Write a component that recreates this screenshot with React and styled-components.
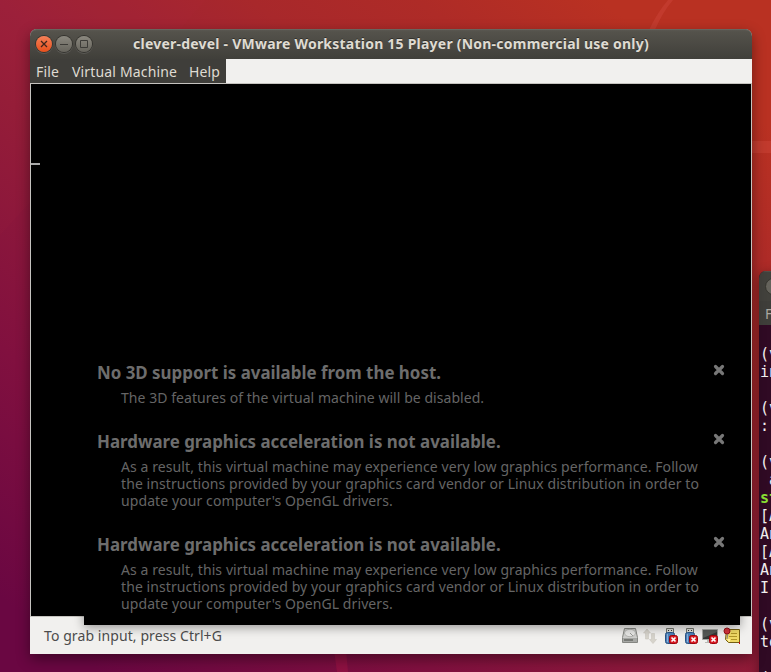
import React from 'react';
import styled, { createGlobalStyle } from 'styled-components';

const GlobalStyle = createGlobalStyle`
  * { box-sizing: border-box; }
  body { margin: 0; overflow: hidden; font-family: "Noto Sans", sans-serif; font-size: 14px; }
`;

const Desktop = styled.main`
  position: relative;
  width: 771px;
  height: 672px;
  overflow: hidden;
`;

const Wallpaper = styled.svg`
  display: block;
  width: 771px;
  height: 672px;
`;

const Window = styled.section`
  position: absolute;
  left: 30px;
  top: 29px;
  width: 722px;
  height: 625px;
  display: flex;
  flex-direction: column;
  background: #f1f0ee;
  border-radius: 7px 7px 0 0;
  box-shadow: 0 5px 14px rgba(0, 0, 0, 0.42);
`;

const TitleBar = styled.header`
  display: grid;
  grid-template-columns: 56px 1fr 56px;
  align-items: center;
  flex: none;
  height: 30px;
  padding: 0 6px;
  border-radius: 7px 7px 0 0;
  background: linear-gradient(#5b5953, #54524b 10%, #403f3a);
  box-shadow: inset 0 1px #67655e;
`;

const WindowButtons = styled.div`
  display: flex;
  gap: 4px;
`;

const RoundButton = styled.button`
  display: grid;
  place-items: center;
  width: 16px;
  height: 16px;
  padding: 0;
  border: 0;
  border-radius: 50%;
  background: ${(p) => (p.$close ? 'linear-gradient(#f58058, #e8501c)' : 'linear-gradient(#8b887f, #66645c)')};
  box-shadow: 0 0 0 1px #34332e, 0 1px 0 1px rgba(255, 255, 255, 0.12);
`;

const Title = styled.h1`
  margin: 0;
  text-align: center;
  color: #dfdbd2;
  font-size: 14px;
  line-height: 20px;
  font-weight: 700;
  letter-spacing: 0.226px;
  white-space: nowrap;
  text-shadow: 0 -1px rgba(0, 0, 0, 0.4);
`;

const MenuBar = styled.nav`
  display: flex;
  flex: none;
  height: 24px;
  align-self: flex-start;
  gap: 12px;
  padding: 0 7px 0 6px;
  background: #3f3e3a;
  color: #dfdbd2;
  line-height: 25px;
  letter-spacing: 0.16px;
  white-space: nowrap;
`;

const MenuItem = styled.span`
  width: ${(p) => p.$width}px;
`;

const Screen = styled.div`
  flex: 1;
  display: flex;
  flex-direction: column;
  justify-content: flex-end;
  border: 1px solid #c5c3bf;
  background: #000;
`;

const Cursor = styled.div`
  width: 9px;
  height: 2px;
  margin: 79px 0 auto;
  background: #aaa;
`;

const Notices = styled.div`
  position: relative;
  z-index: 1;
  width: 656px;
  margin: 0 0 -9px 53px;
  padding: 0 13px 13px;
  background: #000;
  box-shadow: 0 2px 10px rgba(0, 0, 0, 0.4);
`;

const Notice = styled.article`
  color: #656565;
  & + & { margin-top: 22px; }
`;

const NoticeHeader = styled.div`
  display: flex;
  justify-content: space-between;
  align-items: flex-start;
  height: 30px;
  padding-right: 2px;
`;

const NoticeTitle = styled.h2`
  margin: 0;
  color: #6d6d6d;
  font-size: 16.9px;
  line-height: 27px;
  font-weight: 700;
  white-space: nowrap;
`;

const CloseIcon = styled.svg`
  width: 12px;
  height: 12px;
  margin-top: 5px;
`;

const NoticeText = styled.p`
  margin: 0 0 0 24px;
  line-height: 17px;
  letter-spacing: ${(p) => (p.$single ? '0.05px' : '0.09px')};
  white-space: pre;
`;

const StatusBar = styled.footer`
  display: flex;
  flex: none;
  align-items: center;
  justify-content: space-between;
  height: 37px;
  padding: 0 12px 0 14px;
  color: #4c4c4c;
  letter-spacing: 0.085px;
`;

const DeviceIcons = styled.svg`
  width: 118px;
  height: 18px;
`;

const Terminal = styled.section`
  position: absolute;
  left: 759px;
  top: 271px;
  width: 420px;
  height: 460px;
  display: flex;
  flex-direction: column;
  border-radius: 7px 0 0 0;
  background: #300a24;
  box-shadow: 0 3px 12px rgba(0, 0, 0, 0.4);
  overflow: hidden;
`;

const TerminalTitle = styled.header`
  display: flex;
  align-items: center;
  flex: none;
  height: 30px;
  padding-left: 6px;
  background: #42413c;
  box-shadow: inset 0 1px #504f49;
`;

const TerminalButton = styled.span`
  width: 17px;
  height: 17px;
  border: 1px solid #36352f;
  border-radius: 50%;
  background: #65635c;
`;

const TerminalMenu = styled.nav`
  flex: none;
  height: 24px;
  padding-left: 6px;
  background: #3f3e3a;
  color: #aaa8a0;
  line-height: 25px;
`;

const TerminalBody = styled.div`
  padding: 20px 0 0 1px;
  color: #f2f0f1;
  font: 15px/18px "DejaVu Sans Mono", monospace;
  white-space: pre;
`;

const TerminalLine = styled.div`
  height: 18px;
  color: ${(p) => (p.$prompt ? '#8ae234' : 'inherit')};
  font-weight: ${(p) => (p.$prompt ? 700 : 400)};
`;

const noSupport = {
  title: 'No 3D support is available from the host.',
  text: 'The 3D features of the virtual machine will be disabled.',
  single: true,
};
const noAcceleration = {
  title: 'Hardware graphics acceleration is not available.',
  text: "As a result, this virtual machine may experience very low graphics performance. Follow\nthe instructions provided by your graphics card vendor or Linux distribution in order to\nupdate your computer's OpenGL drivers.",
};
const messages = [noSupport, noAcceleration, noAcceleration];

const terminalLines = ['(v', 'in', '', '(v', ':', '', '(v', ' a', 'st', '[A', 'An', '[A', 'An', 'I,', '', '(v', 'to', '', '(v'];

function Background() {
  return (
    <Wallpaper viewBox="0 0 771 672">
      <defs>
        <linearGradient id="base" gradientUnits="userSpaceOnUse" x1="100" y1="672" x2="600" y2="0">
          <stop offset="0" stopColor="#6a0742" />
          <stop offset=".24" stopColor="#81103f" />
          <stop offset=".48" stopColor="#931c38" />
          <stop offset=".57" stopColor="#9b1f3a" />
          <stop offset=".75" stopColor="#a8282b" />
          <stop offset=".87" stopColor="#ae2b27" />
          <stop offset="1" stopColor="#b93122" />
        </linearGradient>
      </defs>
      <path fill="url(#base)" d="M0 0h771v672H0z" />
      <path fill="#c03a48" fillOpacity=".06" d="M0 0h206q-13 13-26 30H30v172L0 235z" />
      <path fill="#cc4437" fillOpacity=".5" d="M668 0h5q-11 13-18 30h-6q8-17 19-30M752 141h19v12h-19z" />
      <path fill="#b51649" fillOpacity=".35" d="M334 650h12l2 22h-11z" />
    </Wallpaper>
  );
}

function ErrorBadge({ x, y }) {
  return (
    <g transform={`translate(${x} ${y})`}>
      <rect x=".5" y=".5" width="8" height="8" rx="2" fill="#d81c24" stroke="#a00008" />
      <path stroke="#fff" strokeWidth="1.7" d="m2.500 2.500 4 4m0-4-4 4" />
    </g>
  );
}

function UsbIcon({ x }) {
  return (
    <g transform={`translate(${x} 0)`}>
      <path fill="#dedfda" stroke="#75776f" d="M2.500 1.500h7v5h-7z" />
      <path fill="#333" d="M4 3h1v1H4zM7 3h1v1H7z" />
      <path fill="#4d80b8" stroke="#285384" d="M1.500 7.500q0-2 2-2h5q2 0 2 2v7q0 2-2 2h-5q-2 0-2-2z" />
      <path fill="#89b0dc" d="M3 7h1v8H3z" />
      <ErrorBadge x={5} y={8} />
    </g>
  );
}

function Devices() {
  return (
    <DeviceIcons viewBox="0 0 118 18">
      <path fill="#cfcfcd" stroke="#858682" d="M2.500 1.500h11l2 9v5H.5v-5z" />
      <ellipse cx="8" cy="6" rx="5.500" ry="3.700" fill="#e7e7e5" stroke="#b5b6b2" />
      <path fill="none" stroke="#999a97" d="m8 6 3 3" />
      <path fill="#a7a8a5" d="M1 11h14v4H1z" />
      <path fill="#777975" d="M2 12h9v2H2z" />
      <path fill="#d6d3cb" stroke="#c9c6bd" strokeWidth=".6" d="m21.500 6 3.500-4 3.500 4h-2v6h-3V6zM27.500 12.500l3.500 4 3.500-4h-2v-6h-3v6z" />
      <UsbIcon x={42} />
      <UsbIcon x={62} />
      <path fill="#343735" stroke="#a5a7a2" d="M80.500 2.500h15v10h-15z" />
      <path fill="#555955" d="M81 3h14v2l-14 6z" />
      <path fill="#b9bab7" d="M85 13h6v2h2v1H83v-1h2z" />
      <ErrorBadge x={87} y={8} />
      <path fill="#efd865" stroke="#735e12" d="M104.500 2.500h13v13h-11l-3-3z" />
      <path fill="#fff0a0" d="M105 12h3v3h-1z" />
      <path fill="none" stroke="#b09427" d="M109 6.500h6M107 9.500h8M109 12.500h6" />
      <path stroke="#8b8780" d="m106 6-1 6" />
      <circle cx="105" cy="4" r="3" fill="#d5343b" stroke="#970e17" />
      <path fill="#cc0a12" d="M117 15h1v2h-1z" />
    </DeviceIcons>
  );
}

export default function App() {
  return (
    <Desktop>
      <GlobalStyle />
      <Background />
      <Terminal>
        <TerminalTitle><TerminalButton /></TerminalTitle>
        <TerminalMenu>File</TerminalMenu>
        <TerminalBody>
          {terminalLines.map((line, i) => (
            <TerminalLine key={i} $prompt={line === 'st'}>{line}</TerminalLine>
          ))}
        </TerminalBody>
      </Terminal>
      <Window>
        <TitleBar>
          <WindowButtons>
            <RoundButton $close aria-label="Close"><svg width="16" height="16"><path d="m5 5 6 6m0-6-6 6" stroke="#40251c" strokeWidth="1.300" /></svg></RoundButton>
            <RoundButton aria-label="Minimize"><svg width="16" height="16"><path d="M4 8.500h8" stroke="#3c3b37" /></svg></RoundButton>
            <RoundButton aria-label="Maximize"><svg width="16" height="16"><path d="M4.500 4.500h7v7h-7z" fill="none" stroke="#3c3b37" /></svg></RoundButton>
          </WindowButtons>
          <Title>clever-devel - VMware Workstation 15 Player (Non-commercial use only)</Title>
        </TitleBar>
        <MenuBar>
          <MenuItem $width={24}>File</MenuItem>
          <MenuItem $width={105}>Virtual Machine</MenuItem>
          <MenuItem $width={30}>Help</MenuItem>
        </MenuBar>
        <Screen>
          <Cursor />
          <Notices>
            {messages.map(({ title, text, single }, i) => (
              <Notice key={i}>
                <NoticeHeader>
                  <NoticeTitle>{title}</NoticeTitle>
                  <CloseIcon viewBox="0 0 12 12"><path d="m2.500 2.500 7 7m0-7-7 7" stroke="#777" strokeWidth="3.200" strokeLinecap="round" /></CloseIcon>
                </NoticeHeader>
                <NoticeText $single={single}>{text}</NoticeText>
              </Notice>
            ))}
          </Notices>
        </Screen>
        <StatusBar>
          <span>To grab input, press Ctrl+G</span>
          <Devices />
        </StatusBar>
      </Window>
    </Desktop>
  );
}
